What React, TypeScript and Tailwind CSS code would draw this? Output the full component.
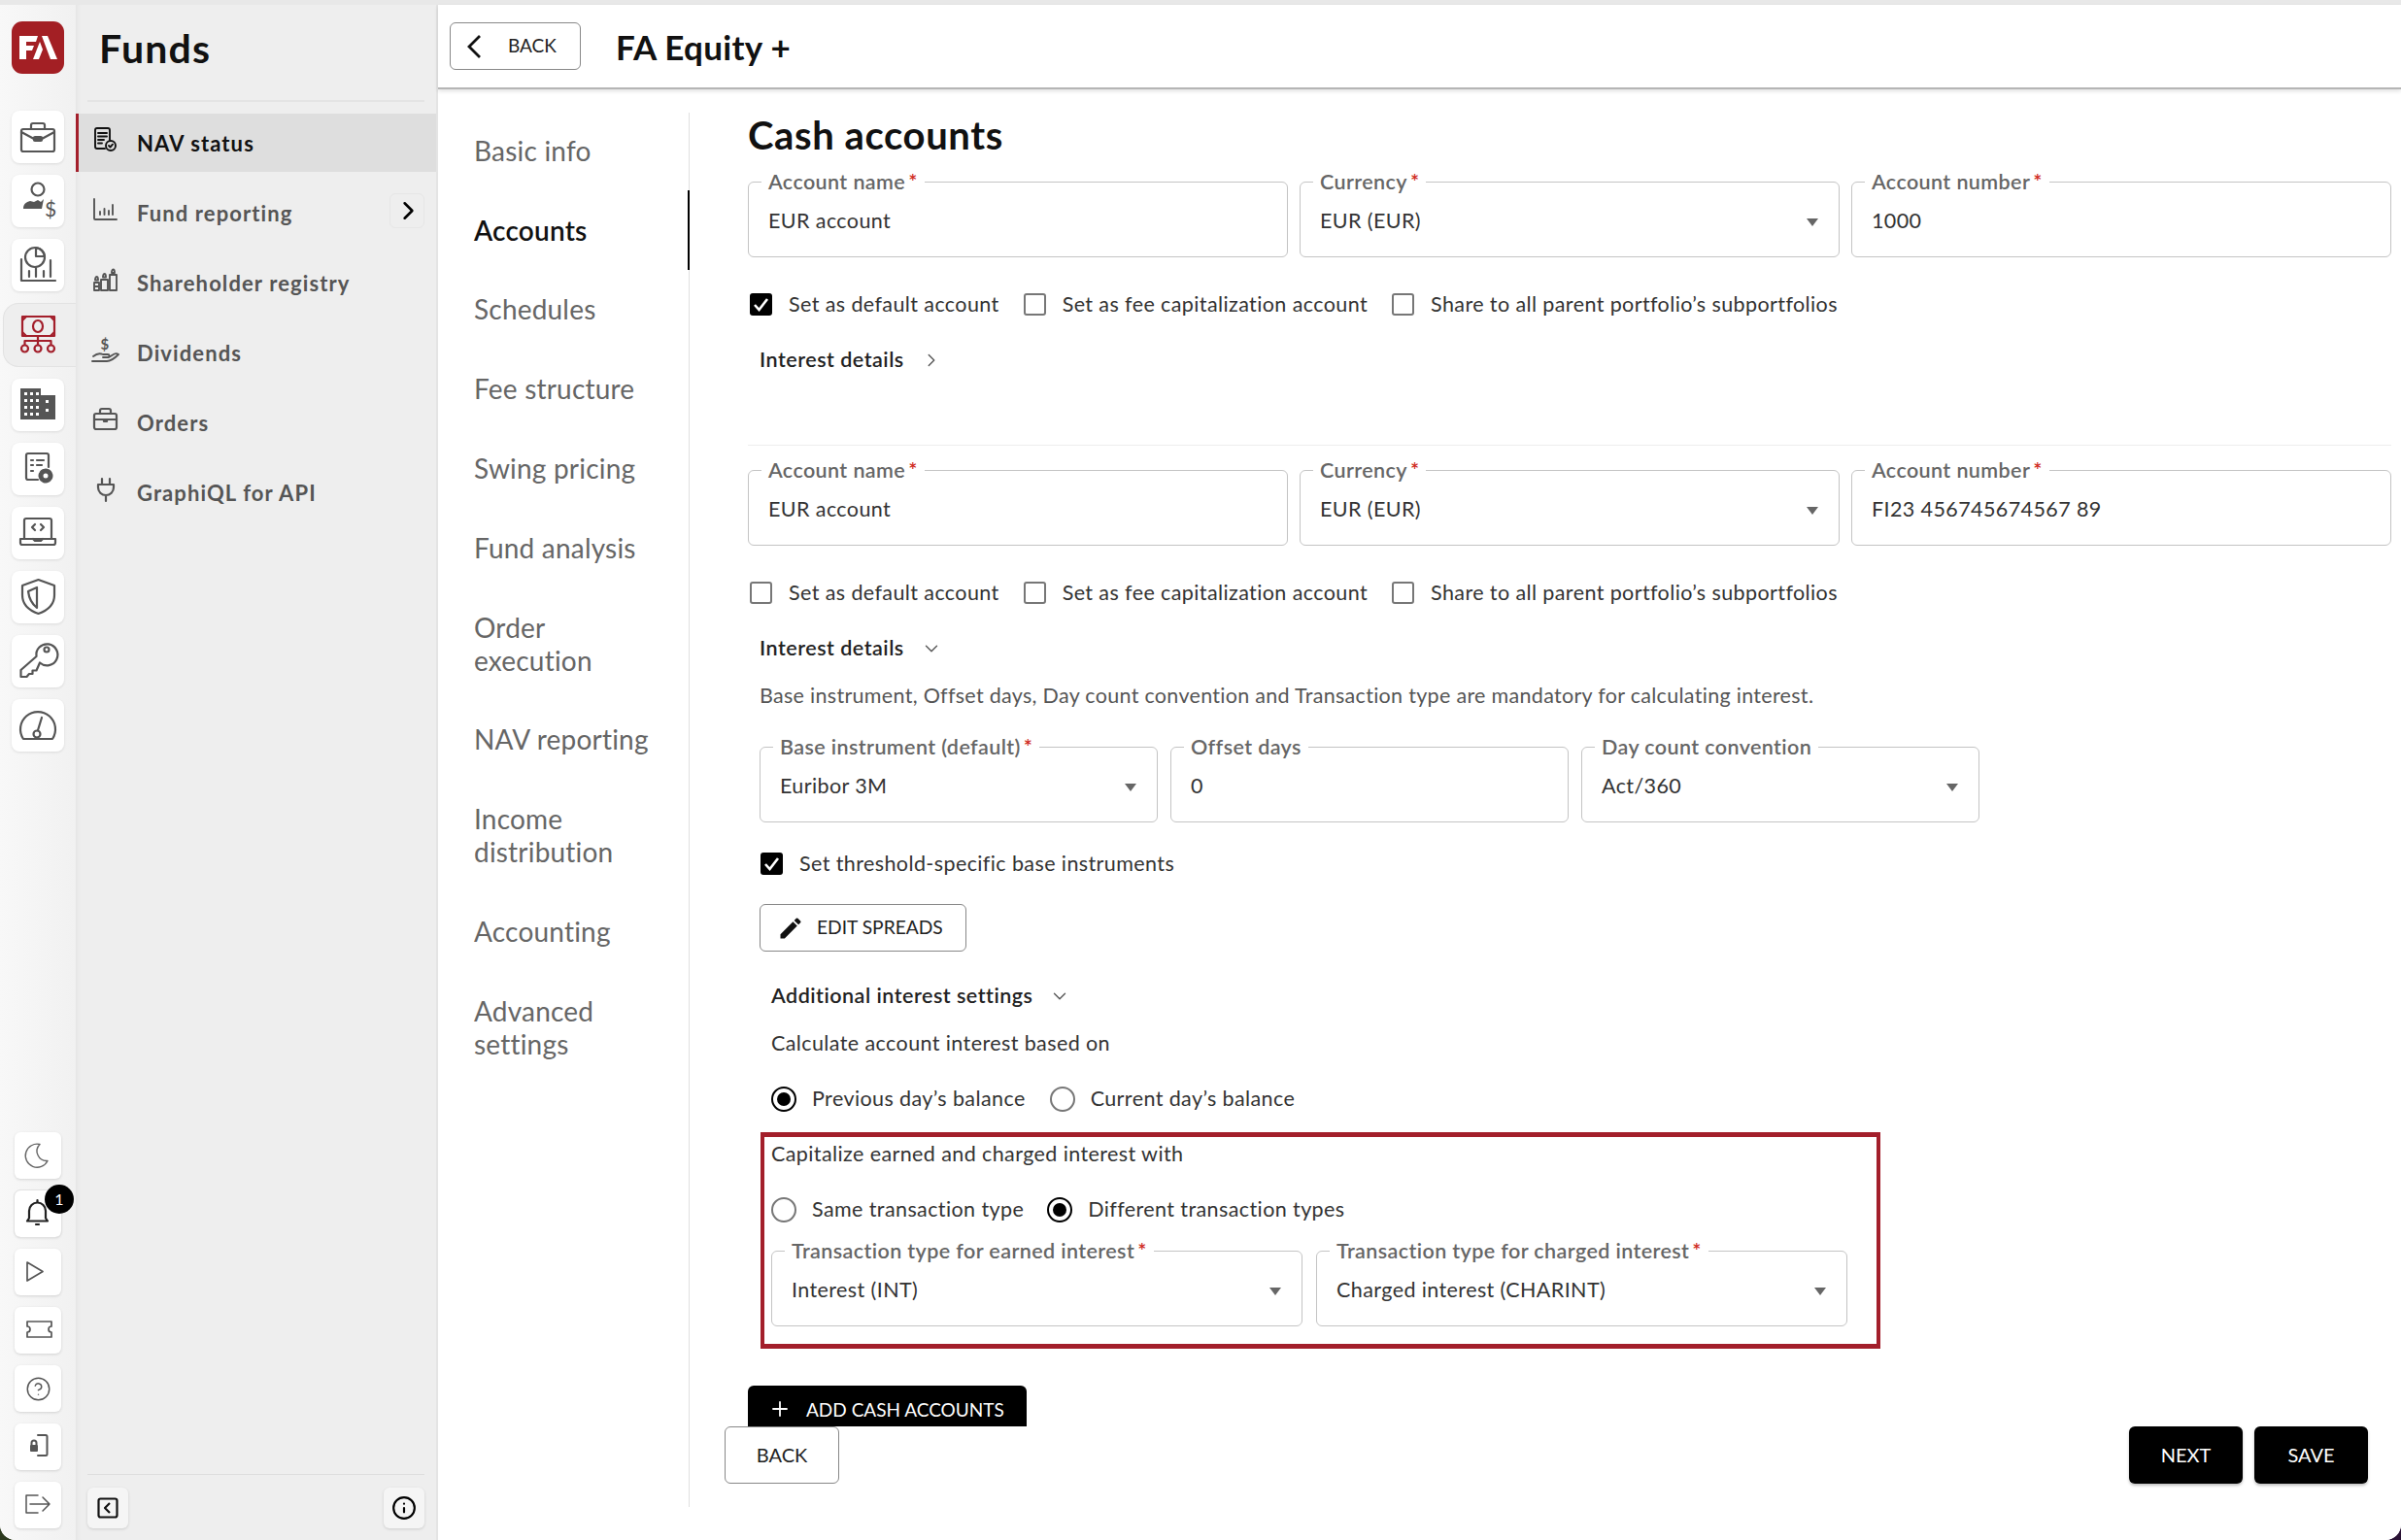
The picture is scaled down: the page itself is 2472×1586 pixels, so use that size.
import { ChevronDown, ChevronRight, CircleHelp, Info, Plus } from "lucide-react";
import type { ReactNode } from "react";

const Tile = ({ children, bordered }: { children: ReactNode; bordered?: boolean }) => (
  <div
    className={
      "relative w-[48px] h-[48px] ml-[15px] rounded-md bg-white shadow-[0_1px_3px_rgba(0,0,0,0.14)] " +
      (bordered ? "outline outline-1 outline-[#e2e2e2]" : "")
    }
  >
    {children}
  </div>
);

const RailIcon = ({ children, color = "#555" }: { children: ReactNode; color?: string }) => (
  <svg width="54" height="54" viewBox="0 0 54 54" fill="none" stroke={color} strokeWidth="2.2" strokeLinecap="round" strokeLinejoin="round">
    {children}
  </svg>
);

const BottomIcon = ({ children, color = "#555", w = 1.7 }: { children: ReactNode; color?: string; w?: number }) => (
  <svg width="48" height="48" viewBox="0 0 48 48" fill="none" stroke={color} strokeWidth={w} strokeLinecap="round" strokeLinejoin="round">
    {children}
  </svg>
);

const SideIcon = ({ children }: { children: ReactNode }) => (
  <svg width="28" height="28" viewBox="0 0 28 28" fill="none" stroke="currentColor" strokeWidth="1.9" strokeLinecap="round" strokeLinejoin="round" className="mb-[6px] shrink-0 overflow-visible">
    {children}
  </svg>
);

const railTop: ReactNode[] = [
  <>
    <rect x="10" y="19" width="34" height="23" rx="2" />
    <path d="M20 19v-4a2 2 0 0 1 2-2h10a2 2 0 0 1 2 2v4" />
    <path d="M10 22l13 7h8l13-7" />
    <rect x="23" y="27" width="8" height="4" rx="1" />
  </>,
  <>
    <circle cx="27" cy="15" r="6.5" />
    <path d="M12 35c0-5 3-7 7-8l4 1 4-2 3 2 3-3-2 10z" fill="#555" stroke="none" />
    <text x="34" y="43" fontSize="21" fill="#555" stroke="none" fontFamily="Lato, sans-serif">$</text>
  </>,
  <>
    <path d="M10 21v22h35" />
    <path d="M18 33v6M25 30v9M33 33v6M40 22v17" />
    <circle cx="24" cy="19" r="10" />
    <path d="M25 9a10 10 0 0 1 9 9h-9z" />
  </>,
];

const railBottom: ReactNode[] = [
  <>
    <path d="M9 10h21v7h15v25H9z" fill="#555" stroke="none" />
    <path d="M13 14h3v3h-3zM19 14h3v3h-3zM25 14h3v3h-3zM13 21h3v3h-3zM19 21h3v3h-3zM25 21h3v3h-3zM13 28h3v3h-3zM19 28h3v3h-3zM25 28h3v3h-3zM13 35h3v3h-3zM19 35h3v3h-3zM25 35h3v3h-3z" fill="#fff" stroke="none" />
    <path d="M35 22h3v3h-3zM35 31h3v3h-3z" fill="#fff" stroke="none" />
  </>,
  <>
    <path d="M27 38H17a2 2 0 0 1-2-2V13a2 2 0 0 1 2-2h19a2 2 0 0 1 2 2v12" />
    <path d="M20 18h2M26 18h7M20 23h2M26 23h5M20 29h2" />
    <circle cx="35" cy="34" r="6" strokeWidth="3" strokeDasharray="2.8 1.6" />
    <circle cx="35" cy="34" r="4" strokeWidth="3" />
  </>,
  <>
    <path d="M13 33V14a2 2 0 0 1 2-2h24a2 2 0 0 1 2 2v19" />
    <path d="M9 33h36v4a2 2 0 0 1-2 2H11a2 2 0 0 1-2-2zM22 33l2 2h6l2-2" />
    <path d="M24 18l-3 3 3 3M30 18l3 3-3 3" />
  </>,
  <>
    <path d="M27.500 9L44 15v10c0 10-8 16-16.500 19C19 41 11 35 11 25V15z" />
    <path d="M26 17v21c-5-4-8-9-9-17z" />
  </>,
  <>
    <path d="M25.500 22L9.500 36v7h6l2.500-3h3.500v-3.500h4l3.500-8A11 11 0 1 0 25.500 22z" />
    <circle cx="36" cy="15" r="2.500" />
  </>,
  <>
    <path d="M12 41a18 18 0 1 1 30 0z" />
    <circle cx="26" cy="36" r="3.500" />
    <path d="M27 32l4-13" />
  </>,
];

const bottomIcons: ReactNode[] = [
  <BottomIcon color="#666" w={1.4}>
    <path d="M34 29.500A12 12 0 1 1 26 12.500a10 10 0 0 0 8 17z" />
  </BottomIcon>,
  <BottomIcon color="#222" w={2.2}>
    <path d="M13 31.500h21l-2-3V21a8.500 8.500 0 0 0-17 0v7.500z" />
    <path d="M23.500 10v2M22 35h3" />
  </BottomIcon>,
  <BottomIcon>
    <path d="M13 14l16 9.500L13 33z" />
  </BottomIcon>,
  <BottomIcon>
    <path d="M13 15h25v5a3 3 0 0 0 0 6v5H13v-5a3 3 0 0 0 0-6z" />
  </BottomIcon>,
  <div className="w-full h-full flex items-center justify-center text-[#555]">
    <CircleHelp size={27} strokeWidth={1.3} />
  </div>,
  <BottomIcon w={2}>
    <path d="M24 12h8a1.500 1.500 0 0 1 1.500 1.500v18A1.500 1.500 0 0 1 32 33h-8" />
    <rect x="16" y="22" width="8" height="7" rx="1" fill="#555" stroke="none" />
    <path d="M17.500 22v-2a2.500 2.500 0 0 1 5 0v2" />
  </BottomIcon>,
  <BottomIcon w={1.5}>
    <path d="M24 14H12v18h12M16 23h20M29 16l7 7-7 7" />
  </BottomIcon>,
];

const sideItems: { label: string; icon: ReactNode; active?: boolean; more?: boolean }[] = [
  {
    label: "NAV status",
    active: true,
    icon: (
      <>
        <path d="M13 23H5a2 2 0 0 1-2-2V4a2 2 0 0 1 2-2h11a2 2 0 0 1 2 2v10" />
        <path d="M6 7h9M6 10.500h9M6 14h6M6 17.500h4" />
        <circle cx="19" cy="20" r="5" />
        <path d="M17 20l1.500 1.500 2.500-2.800" />
      </>
    ),
  },
  {
    label: "Fund reporting",
    more: true,
    icon: (
      <>
        <path d="M2 3v20a1 1 0 0 0 1 1h22" />
        <path d="M8 16v3M12.500 13v6M17 15v4M21 9v10" />
      </>
    ),
  },
  {
    label: "Shareholder registry",
    icon: (
      <>
        <path d="M2 17h5v8H2zM9 14h7v11H9zM18 9h7v16h-7zM2 21h5" />
        <path d="M3 14.500c0-2 .5-3.500 1.500-3.500S6 12.500 6 14.500zM11 11.500c0-2 .5-3.500 1.500-3.500s1.500 1.500 1.500 3.500zM20 7c0-2 .5-3.500 1.500-3.500S23 5 23 7z" />
      </>
    ),
  },
  {
    label: "Dividends",
    icon: (
      <>
        <text x="8.500" y="14" fontSize="15" fontWeight="700" fill="currentColor" stroke="none" fontFamily="Lato, sans-serif">$</text>
        <path d="M0 26h15c5 0 9-4 12-7-2-1.500-4-1-6 .5L17 22h-6M1 21c3-2.500 7-3.500 10-2h5c2 0 2 3 0 3" />
      </>
    ),
  },
  {
    label: "Orders",
    icon: (
      <>
        <rect x="2" y="8" width="23" height="16" rx="2" strokeWidth="2.200" />
        <path d="M8 8V5a2 2 0 0 1 2-2h7a2 2 0 0 1 2 2v3M2 14h23M12 14v2h3v-2" strokeWidth="2.200" />
      </>
    ),
  },
  {
    label: "GraphiQL for API",
    icon: (
      <>
        <path d="M10 3v6M18 3v6M6 9h16v3a8 8 0 0 1-16 0zM14 20v6" strokeWidth="2.200" />
      </>
    ),
  },
];

const tabs = [
  "Basic info",
  "Accounts",
  "Schedules",
  "Fee structure",
  "Swing pricing",
  "Fund analysis",
  "Order\nexecution",
  "NAV reporting",
  "Income\ndistribution",
  "Accounting",
  "Advanced\nsettings",
];

const Arrow = () => (
  <svg width="12" height="8" viewBox="0 0 12 8" className="absolute right-[21px] top-[26px]">
    <path d="M0 0h12L6 8z" fill="#666" />
  </svg>
);

function Field({ label, value, required, select }: { label: string; value: string; required?: boolean; select?: boolean }) {
  return (
    <fieldset className="relative h-[90px] min-w-0 border border-[#c4c4c4] rounded-md">
      <legend className="ml-[13px] px-[7px] h-[24px] leading-[24px] text-[21.500px] font-semibold text-[#666] tracking-[0.4px]">
        {label}
        {required && <span className="text-[#d0291c] ml-[3px]">*</span>}
      </legend>
      <div className="pl-[20px] pt-[14px] leading-[28px] text-[21.500px] text-[#333] tracking-[0.4px]">{value}</div>
      {select && <Arrow />}
    </fieldset>
  );
}

function Checkbox({ label, checked }: { label: string; checked?: boolean }) {
  return (
    <label className="flex items-center gap-[17px] h-[23px] text-[21.500px] text-[#333] tracking-[0.4px]">
      {checked ? (
        <span className="w-[23px] h-[23px] rounded-[3px] bg-black flex items-center justify-center">
          <svg width="17" height="15" viewBox="0 0 17 15" fill="none" stroke="#fff" strokeWidth="2.6">
            <path d="M2 8l4.500 5L15 2" />
          </svg>
        </span>
      ) : (
        <span className="w-[23px] h-[23px] rounded-[3px] border-2 border-[#777] bg-white" />
      )}
      <span>{label}</span>
    </label>
  );
}

function Radio({ label, checked }: { label: string; checked?: boolean }) {
  return (
    <label className="flex items-center gap-[16px] h-[27px] text-[21.500px] text-[#333] tracking-[0.4px]">
      {checked ? (
        <span className="w-[26px] h-[26px] rounded-full border-[2.5px] border-black flex items-center justify-center">
          <span className="w-[14px] h-[14px] rounded-full bg-black" />
        </span>
      ) : (
        <span className="w-[26px] h-[26px] rounded-full border-2 border-[#777]" />
      )}
      <span className="pb-[1px]">{label}</span>
    </label>
  );
}

function Disclosure({ label, open, indent }: { label: string; open?: boolean; indent: string }) {
  return (
    <div className={"flex items-center h-[24px] gap-[17px] text-[21.500px] font-semibold text-[#222] tracking-[0.5px] " + indent}>
      <span className="pb-[1px]">{label}</span>
      {open ? <ChevronDown size={22} strokeWidth={1.5} className="text-[#555]" /> : <ChevronRight size={22} strokeWidth={1.5} className="text-[#555]" />}
    </div>
  );
}

export default function App() {
  return (
    <div className="w-[2472px] h-[1586px] overflow-hidden bg-gradient-to-r from-[#2c3a1e] to-[#2a1235] font-[Lato,sans-serif]">
      <div className="w-full h-full flex flex-col rounded-b-[16px] overflow-hidden bg-white">
        <div className="h-[5px] bg-[#e8e8e8] shrink-0" />
        <div className="flex flex-1 min-h-0">
          {/* icon rail */}
          <div className="w-[78px] shrink-0 flex flex-col bg-gradient-to-r from-[#f8f8f8] to-[#f1f1f1] pb-[12px]">
            <div className="ml-[12px] mt-[17px] w-[54px] h-[54px] rounded-[11px] bg-[#a31f24]">
              <svg width="54" height="54" viewBox="0 0 54 54" fill="#fff">
                <path d="M8 15h19l-2 6H15v4h8l-2 5h-6v9H8z" />
                <path d="M31 15h6l10 24h-7z" />
                <path d="M29 21l3 8-4 10h-6z" />
              </svg>
            </div>
            <div className="mt-[38px] flex flex-col gap-[12px]">
              {railTop.map((icon, i) => (
                <div key={i} className="ml-[12px] w-[54px] h-[54px] rounded-lg bg-white shadow-[0_1px_3px_rgba(0,0,0,0.1)]">
                  <RailIcon>{icon}</RailIcon>
                </div>
              ))}
              <div className="ml-[3px] w-[75px] h-[66px] rounded-l-[16px] bg-[#eeeeee] border border-r-0 border-[#e2e2e2] flex items-center pl-[8px]">
                <RailIcon color="#a31f2b">
                  <rect x="11" y="8" width="33" height="20" />
                  <path d="M11 12l4-4M40 8l4 4M44 24l-4 4M15 28l-4-4" />
                  <ellipse cx="27" cy="18" rx="5" ry="6" />
                  <path d="M27 28v9M13.500 33h27M13.500 33v4M40.500 33v4" />
                  <circle cx="13.500" cy="41" r="3.500" />
                  <circle cx="27" cy="41" r="3.500" />
                  <circle cx="40.500" cy="41" r="3.500" />
                </RailIcon>
              </div>
              {railBottom.map((icon, i) => (
                <div key={i} className="ml-[12px] w-[54px] h-[54px] rounded-lg bg-white shadow-[0_1px_3px_rgba(0,0,0,0.1)]">
                  <RailIcon>{icon}</RailIcon>
                </div>
              ))}
            </div>
            <div className="mt-auto flex flex-col gap-[12px]">
              {bottomIcons.map((icon, i) => (
                <Tile key={i} bordered={i === 1}>
                  {icon}
                  {i === 1 && (
                    <span className="absolute left-[31px] top-[-6px] w-[30px] h-[30px] rounded-full bg-black text-white text-[16px] flex items-center justify-center">
                      1
                    </span>
                  )}
                </Tile>
              ))}
            </div>
          </div>

          {/* section sidebar */}
          <div className="w-[373px] shrink-0 flex flex-col bg-[#eeeeee] border-r-2 border-[#e4e4e4] shadow-[inset_6px_0_6px_-6px_rgba(0,0,0,0.08)] pb-[12px]">
            <div className="h-[98px] flex items-center pl-[24px] pb-[10px] shrink-0">
              <h1 className="text-[41px] font-bold text-[#111] leading-none tracking-[1.2px]">Funds</h1>
            </div>
            <div className="mx-[12px] h-[2px] bg-[#e4e4e4] shrink-0" />
            <nav className="mt-[12px] flex flex-col gap-[12px]">
              {sideItems.map((item) => (
                <div
                  key={item.label}
                  className={
                    "h-[60px] flex items-center pl-[14px] gap-[18px] border-l-[3px] text-[22px] font-bold tracking-[1.1px] " +
                    (item.active ? "border-[#a31f2b] bg-[#dedede] text-[#111]" : "border-transparent text-[#555]")
                  }
                >
                  <SideIcon>{item.icon}</SideIcon>
                  {item.label}
                  {item.more && (
                    <span className="ml-auto mr-[12px] w-[36px] h-[36px] mb-[4px] pl-[3px] rounded-md border border-[#e6e6e6] flex items-center justify-center text-black">
                      <ChevronRight size={32} strokeWidth={2} />
                    </span>
                  )}
                </div>
              ))}
            </nav>
            <div className="mt-auto mx-[12px] h-[1px] bg-[#dddddd]" />
            <div className="mx-[12px] mt-[13px] flex justify-between">
              <span className="w-[42px] h-[42px] rounded-md bg-[#f5f5f5] shadow-[0_1px_3px_rgba(0,0,0,0.14)] flex items-center justify-center">
                <svg width="22" height="22" viewBox="0 0 22 22" fill="none" stroke="#111" strokeWidth="2.2" strokeLinejoin="round">
                  <rect x="1.500" y="1.500" width="19" height="19" rx="2" />
                  <path d="M13 6l-5 5 5 5" />
                </svg>
              </span>
              <span className="w-[42px] h-[42px] rounded-md bg-[#f5f5f5] shadow-[0_1px_3px_rgba(0,0,0,0.14)] flex items-center justify-center text-black">
                <Info size={26} strokeWidth={2} />
              </span>
            </div>
          </div>

          {/* main */}
          <div className="flex-1 min-w-0 flex flex-col bg-white">
            <header className="h-[87px] shrink-0 flex items-center pl-[12px] gap-[36px] border-b-2 border-[#b5b5b5] shadow-[0_2px_4px_rgba(0,0,0,0.12)]">
              <button className="w-[135px] h-[49px] rounded-md border border-[#888] flex items-center pl-[16px] gap-[26px] text-[19px] text-[#222]">
                <svg width="18" height="24" viewBox="0 0 18 24" fill="none" stroke="#111" strokeWidth="2.8" className="-ml-[1px]">
                  <path d="M15 1L4 12l11 11" />
                </svg>
                BACK
              </button>
              <h2 className="text-[35px] font-bold text-[#111] leading-none tracking-[0.3px] pt-[2px]">FA Equity +</h2>
            </header>

            <div className="flex flex-1 min-h-0">
              <div className="w-[259px] shrink-0 h-[1436px] mt-[24px] border-r border-[#e0e0e0]">
                <div className="-mt-[2px]">
                  {tabs.map((t, i) => (
                    <div
                      key={t}
                      className={
                        "relative py-[23.900px] pl-[37px] text-[28px] leading-[34px] tracking-[0.2px] whitespace-pre-line " +
                        (i === 1 ? "font-semibold text-[#111]" : "text-[#666]")
                      }
                    >
                      {t}
                      {i === 1 && <span className="absolute right-[-1px] top-0 bottom-0 w-[2.500px] bg-black" />}
                    </div>
                  ))}
                </div>
              </div>

              <div className="flex-1 min-w-0 flex flex-col">
                <div className="h-[1377px] shrink-0 overflow-hidden pl-[60px] pr-[10px] pt-[25px]">
                  <h3 className="h-[44px] leading-[44px] text-[40px] font-bold text-[#111] tracking-[0.6px]">Cash accounts</h3>

                  <div className="mt-[14px] grid grid-cols-3 gap-[12px]">
                    <Field label="Account name" value="EUR account" required />
                    <Field label="Currency" value="EUR (EUR)" required select />
                    <Field label="Account number" value="1000" required />
                  </div>
                  <div className="mt-[37px] ml-[2px] flex gap-[25px]">
                    <Checkbox label="Set as default account" checked />
                    <Checkbox label="Set as fee capitalization account" />
                    <Checkbox label="Share to all parent portfolio’s subportfolios" />
                  </div>
                  <div className="mt-[34px]">
                    <Disclosure label="Interest details" indent="pl-[12px]" />
                  </div>
                  <div className="mt-[75px] h-[1px] bg-[#eeeeee]" />

                  <div className="mt-[13px] grid grid-cols-3 gap-[12px]">
                    <Field label="Account name" value="EUR account" required />
                    <Field label="Currency" value="EUR (EUR)" required select />
                    <Field label="Account number" value="FI23 456745674567 89" required />
                  </div>
                  <div className="mt-[37px] ml-[2px] flex gap-[25px]">
                    <Checkbox label="Set as default account" />
                    <Checkbox label="Set as fee capitalization account" />
                    <Checkbox label="Share to all parent portfolio’s subportfolios" />
                  </div>
                  <div className="mt-[34px]">
                    <Disclosure label="Interest details" open indent="pl-[12px]" />
                  </div>

                  <div className="pl-[12px]">
                    <p className="mt-[25px] h-[24px] leading-[22px] text-[21.500px] text-[#555] tracking-[0.3px]">
                      Base instrument, Offset days, Day count convention and Transaction type are mandatory for calculating interest.
                    </p>
                    <div className="mt-[28px] grid grid-cols-[410px_410px_410px] gap-[13px]">
                      <Field label="Base instrument (default)" value="Euribor 3M" required select />
                      <Field label="Offset days" value="0" />
                      <Field label="Day count convention" value="Act/360" select />
                    </div>
                    <div className="mt-[31px] ml-[1px]">
                      <Checkbox label="Set threshold-specific base instruments" checked />
                    </div>
                    <button className="mt-[30px] w-[213px] h-[49px] rounded-md border border-[#888] flex items-center pl-[17px] gap-[13px] text-[19.200px] text-[#222]">
                      <svg width="28" height="28" viewBox="0 0 24 24" fill="#111">
                        <path d="M3 17.250V21h3.750L17.810 9.940l-3.750-3.750L3 17.250zM20.710 7.040c.39-.39.39-1.020 0-1.410l-2.340-2.340a.996.996 0 0 0-1.410 0l-1.830 1.830 3.750 3.750 1.830-1.830z" />
                      </svg>
                      EDIT SPREADS
                    </button>
                    <div className="mt-[34px]">
                      <Disclosure label="Additional interest settings" open indent="pl-[12px]" />
                    </div>
                    <p className="mt-[25px] pl-[12px] h-[24px] leading-[22px] text-[21.500px] text-[#333] tracking-[0.4px]">
                      Calculate account interest based on
                    </p>
                    <div className="mt-[31px] pl-[12px] flex gap-[25px]">
                      <Radio label="Previous day’s balance" checked />
                      <Radio label="Current day’s balance" />
                    </div>
                  </div>

                  <div className="mt-[21px] ml-[13px] w-[1153px] h-[223px] border-x-4 border-y-[5px] border-[#a31f2b] pl-[7px]">
                    <p className="mt-[6px] h-[24px] leading-[22px] text-[21.500px] text-[#333] tracking-[0.4px]">
                      Capitalize earned and charged interest with
                    </p>
                    <div className="mt-[31px] flex gap-[24px]">
                      <Radio label="Same transaction type" />
                      <Radio label="Different transaction types" checked />
                    </div>
                    <div className="mt-[17px] grid grid-cols-[547px_547px] gap-[14px]">
                      <Field label="Transaction type for earned interest" value="Interest (INT)" required select />
                      <Field label="Transaction type for charged interest" value="Charged interest (CHARINT)" required select />
                    </div>
                  </div>

                  <button className="mt-[38px] w-[287px] h-[52px] rounded-md bg-black text-white flex items-start pt-[11px] pl-[21px] gap-[15px] text-[19px]">
                    <Plus size={24} strokeWidth={1.8} className="mt-[1px]" />
                    ADD CASH ACCOUNTS
                  </button>
                </div>

                <div className="flex pl-[36px] pr-[34px] gap-[12px]">
                  <button className="w-[118px] h-[59px] pb-[2px] rounded-md border border-[#888] bg-white text-[20px] text-[#222]">BACK</button>
                  <button className="ml-auto w-[117px] h-[59px] pb-[2px] rounded-md bg-black text-white text-[20px] shadow-[0_2px_3px_rgba(0,0,0,0.25)]">NEXT</button>
                  <button className="w-[117px] h-[59px] pb-[2px] rounded-md bg-black text-white text-[20px] shadow-[0_2px_3px_rgba(0,0,0,0.25)]">SAVE</button>
                </div>
              </div>
            </div>
          </div>
        </div>
      </div>
    </div>
  );
}
